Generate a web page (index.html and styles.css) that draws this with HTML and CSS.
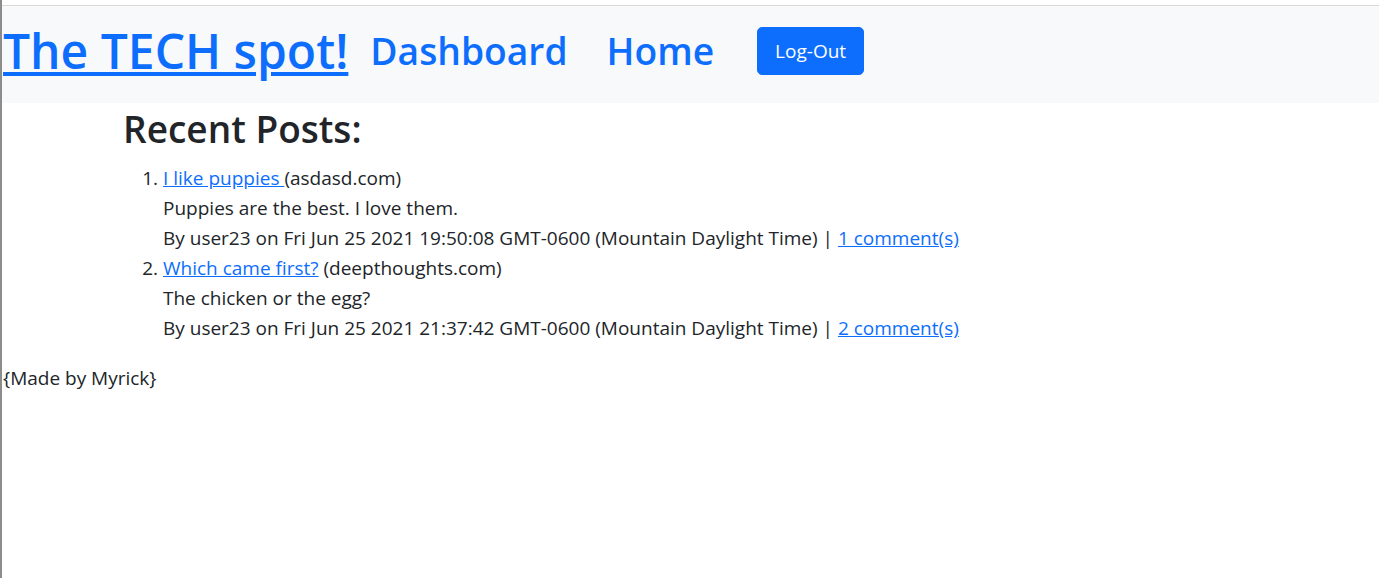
FILE: index.html
```html
<!DOCTYPE html>
<html lang="en">
<head>
<meta charset="utf-8">
<title>The TECH spot!</title>
<link rel="stylesheet" href="styles.css">
</head>
<body>
<div class="page">
  <header class="topbar">
    <nav class="nav">
      <a class="brand" href="#">The TECH spot!</a>
      <a class="nav-link nav-dash" href="#">Dashboard</a>
      <a class="nav-link nav-home" href="#">Home</a>
      <button class="btn-logout" type="button">Log-Out</button>
    </nav>
  </header>
  <main class="content">
    <h2 class="heading">Recent Posts:</h2>
    <ol class="posts">
      <li class="post">
        <div><a href="#">I like puppies </a>(asdasd.com)</div>
        <div>Puppies are the best. I love them.</div>
        <div>By user23 on Fri Jun 25 2021 19:50:08 GMT-0600 (Mountain Daylight Time) | <a href="#">1 comment(s)</a></div>
      </li>
      <li class="post">
        <div><a href="#">Which came first?</a> (deepthoughts.com)</div>
        <div>The chicken or the egg?</div>
        <div>By user23 on Fri Jun 25 2021 21:37:42 GMT-0600 (Mountain Daylight Time) | <a href="#">2 comment(s)</a></div>
      </li>
    </ol>
  </main>
  <footer class="footer">{Made by Myrick}</footer>
</div>
</body>
</html>
```

FILE: styles.css
```css
html, body {
  margin: 0;
  padding: 0;
  background: #fff;
}
body {
  font-family: "Open Sans", "Noto Sans", sans-serif;
  font-size: 19px;
  line-height: 30px;
  color: #212529;
}
.page {
  border-left: 2px solid #8c8c8c;
  min-height: 578px;
  box-sizing: border-box;
  padding-top: 5px;
}
a {
  color: #0d6efd;
  text-decoration: underline;
}
.topbar {
  border-top: 1px solid #d9d9d9;
  background: #f8f9fa;
}
.nav {
  height: 97px;
  box-sizing: border-box;
  padding: 0 0 8px 1px;
  display: flex;
  align-items: center;
}
.brand {
  font-size: 48px;
  line-height: 60px;
  font-weight: 600;
  margin-right: 22px;
}
.nav-link {
  font-size: 37.2px;
  line-height: 48px;
  font-weight: 600;
  text-decoration: none;
}
.nav-dash {
  margin-right: 39px;
}
.nav-home {
  margin-right: 43px;
}
.btn-logout {
  font-family: inherit;
  font-size: 19px;
  line-height: 30px;
  color: #fff;
  background: #0d6efd;
  border: 1px solid #0d6efd;
  border-radius: 5px;
  padding: 8px 17px;
  cursor: pointer;
}
.content {
  padding-left: 121px;
}
.heading {
  margin: 2px 0 10px;
  font-size: 37px;
  line-height: 48px;
  font-weight: 600;
}
.posts {
  margin: 0 0 20px;
  padding-left: 40px;
}
.footer {
  padding-left: 1px;
}
```
